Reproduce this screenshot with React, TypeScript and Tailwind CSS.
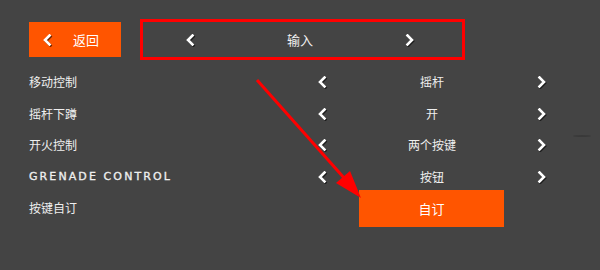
import React from "react";

const cjk = { fontFamily: '"Noto Sans CJK SC", "Noto Sans", sans-serif' };

function Chev({ dir }: { dir: "l" | "r" }) {
  return (
    <svg width="10" height="12" viewBox="0 0 10 12" className="drop-shadow-[1px_1px_0_rgba(0,0,0,0.6)]">
      {dir === "l" ? (
        <polyline points="7.5,1.5 3,6 7.5,10.5" fill="none" stroke="#fff" strokeWidth="2.6" strokeLinecap="square" />
      ) : (
        <polyline points="2.5,1.5 7,6 2.5,10.5" fill="none" stroke="#fff" strokeWidth="2.6" strokeLinecap="square" />
      )}
    </svg>
  );
}

function Row({ label, value, grenade }: { label: string; value: string; grenade?: boolean }) {
  return (
    <div className="flex h-[31.5px] items-center">
      {grenade ? (
        <div
          className="w-[288px] text-[11px] font-normal tracking-[2.1px] text-[#f0f0f0]"
          style={{ fontFamily: '"DejaVu Sans", sans-serif', WebkitTextStroke: "0.3px #f0f0f0" }}
        >
          {label}
        </div>
      ) : (
        <div className="w-[288px] text-[12px] text-[#efefef]" style={cjk}>
          {label}
        </div>
      )}
      <div className="flex w-[10px] justify-center">
        <Chev dir="l" />
      </div>
      <div className="w-[210px] text-center text-[12px] text-[#efefef]" style={cjk}>
        {value}
      </div>
      <div className="flex w-[10px] justify-center">
        <Chev dir="r" />
      </div>
    </div>
  );
}

export default function App() {
  return (
    <div className="relative h-[270px] w-[600px] overflow-hidden bg-[#444444]">
      <div className="flex items-center pl-[29px] pt-[19px]">
        <div className="flex h-[35px] w-[92px] items-center bg-[#ff5500] pl-[13px]">
          <Chev dir="l" />
          <span className="ml-[21px] text-[13px] text-white" style={cjk}>
            返回
          </span>
        </div>
        <div className="ml-[19px] flex h-[41px] w-[325px] items-center border-[3.5px] border-[#ff0000] pl-[42px]">
          <Chev dir="l" />
          <div className="w-[210px] text-center text-[13px] text-[#f2f2f2]" style={cjk}>
            输入
          </div>
          <Chev dir="r" />
        </div>
      </div>
      <div className="mt-[6.5px] flex flex-col pl-[29px]">
        <Row label="移动控制" value="摇杆" />
        <Row label="摇杆下蹲" value="开" />
        <Row label="开火控制" value="两个按键" />
        <Row label="GRENADE CONTROL" value="按钮" grenade />
        <div className="flex h-[31.5px] items-center">
          <div className="w-[288px] text-[12px] text-[#efefef]" style={cjk}>
            按键自订
          </div>
          <div className="-my-[3px] ml-[42px] flex h-[37px] w-[145px] items-center justify-center bg-[#ff5500] text-[13px] text-white" style={cjk}>
            自订
          </div>
        </div>
      </div>
      <div className="absolute left-[573px] top-[135px] h-[2px] w-[18px] rounded-[50%] bg-[#333333] opacity-60 blur-[0.5px]" />
      <svg className="pointer-events-none absolute left-0 top-0" width="600" height="270">
        <line x1="257" y1="80" x2="345" y2="179" stroke="#ff0000" strokeWidth="3" />
        <polygon points="361,198 336,183 350,171" fill="#ff0000" />
      </svg>
    </div>
  );
}
